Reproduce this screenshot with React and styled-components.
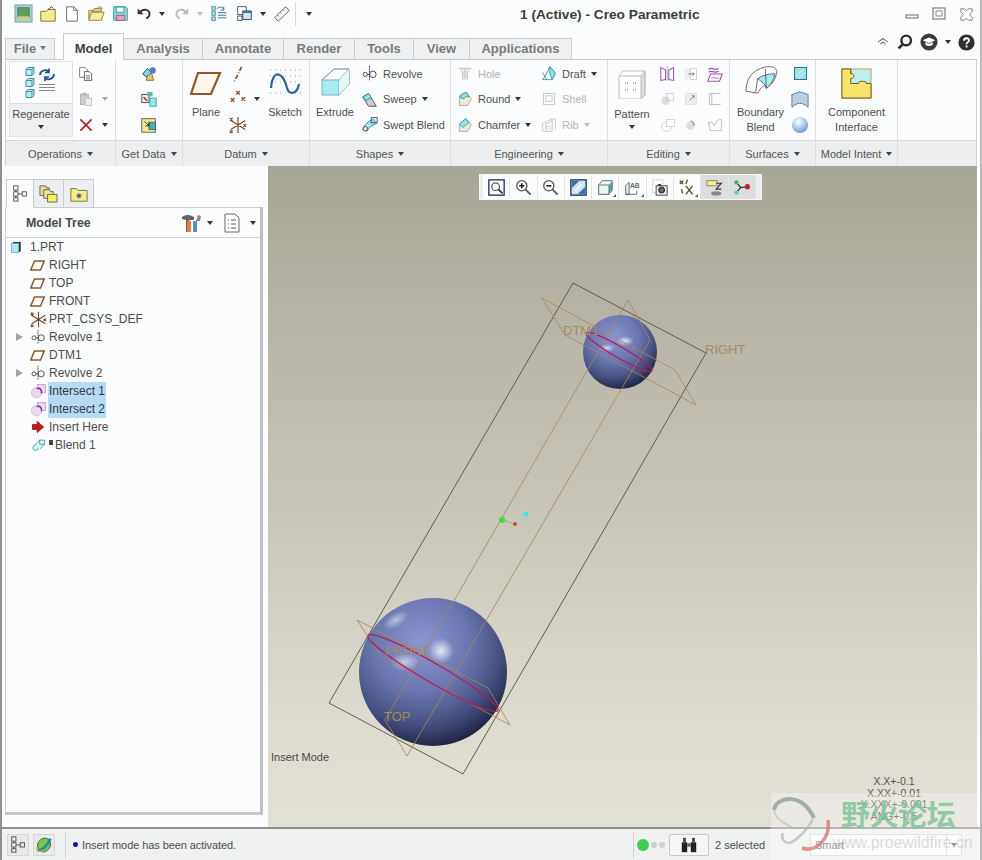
import React from "react";
import styled, { createGlobalStyle } from "styled-components";

const Global = createGlobalStyle`
  html, body { margin: 0; padding: 0; overflow: hidden; background: #fbfcfd; }
  body { font-family: "Liberation Sans", Arial, sans-serif; font-size: 11px; color: #4a4a4a; }
`;

const B = "#8a5a2e", C = "#b5f0f4", G = "#c9c9c9", P = "#a050b0";

const paths = {
  app: <><rect x="1" y="1" width="18" height="18" fill="#a7d6c5" stroke="#7f9f9a" /><rect x="4" y="4" width="12" height="10" fill="#5f9f55" stroke="#3f6f9f" /><rect x="4" y="13" width="12" height="3" fill="#d8d080" /></>,
  folderStar: <><path d="M2 7h6l2-2h8v13H2z" fill="#f6ec8e" stroke="#7a6a20" /><path d="M10 5l4-3 2 2" fill="none" stroke="#333" /></>,
  page: <path d="M4 2h8l4 4v12H4z M12 2v4h4" fill="#fff" stroke="#666" />,
  open: <><path d="M2 6h5l1-2h8v3H6l-3 9H2z" fill="#efe08a" stroke="#8a7a30" /><path d="M5 8h14l-3 9H2z" fill="#f8ec9e" stroke="#8a7a30" /><path d="M11 4c2-3 5-2 6 0" fill="none" stroke="#4a7fa0" /></>,
  save: <><path d="M2 2h14l2 2v14H2z" fill="#8fdcdc" stroke="#2f8f9a" /><rect x="5" y="2.5" width="9" height="6" fill="#fff" stroke="#2f8f9a" /><rect x="5" y="12" width="10" height="6" fill="#e8a0b8" stroke="#a05070" /></>,
  undo: <><path d="M5 8c4-4 11-3 11 3 0 3-2 4-4 5" fill="none" stroke="#333" strokeWidth="2.2" /><path d="M2 4v7h7z" fill="#333" /></>,
  redo: <><path d="M15 8c-4-4-11-3-11 3 0 3 2 4 4 5" fill="none" stroke="#bbb" strokeWidth="2.2" /><path d="M18 4v7h-7z" fill="#bbb" /></>,
  regenSmall: <><rect x="1" y="2" width="4" height="4" fill={C} stroke="#3a7a90" /><rect x="1" y="8" width="4" height="4" fill={C} stroke="#3a7a90" /><rect x="1" y="14" width="4" height="4" fill={C} stroke="#3a7a90" /><path d="M7 5c1-3 6-4 8 0M15 2v4h-4M8 9h10M8 12h10M8 15h10" fill="none" stroke="#2a5a90" /></>,
  windows: <><rect x="2" y="2" width="10" height="9" fill="#fff" stroke="#444" /><rect x="8" y="7" width="10" height="10" fill="#cfe7ee" stroke="#336" /><rect x="8" y="7" width="10" height="2.5" fill="#3f78a8" /><rect x="2" y="13" width="5" height="5" fill="#fff" stroke="#444" /></>,
  ruler: <><path d="M2 14L14 2l4 4L6 18z" fill="#fff" stroke="#444" /><path d="M5 11l2 2M8 8l2 2M11 5l2 2" stroke="#888" /></>,
  regen: <>
    <path d="M1 2.500l2-2h6v6l-2 2H1zM1 2.500h6v6M7 2.500l2-2" fill={C} stroke="#4a8a9a" />
    <path d="M1 13.500l2-2h6v6l-2 2H1zM1 13.500h6v6M7 13.500l2-2" fill={C} stroke="#4a8a9a" />
    <path d="M1 24.500l2-2h6v6l-2 2H1zM1 24.500h6v6M7 24.500l2-2" fill={C} stroke="#4a8a9a" />
    <path d="M15 8c0-4 6-7 9-3M24 1.500v4h-4M29 7c0 4-5 7-9 4M20 14v-4h4" fill="none" stroke="#1f4f8f" strokeWidth="1.700" />
    <path d="M14 17.500h16M14 20.500h16M14 23.500h16" stroke="#8a8a8a" />
  </>,
  copy: <><path d="M2 2h7l3 3v9H2z" fill="#fff" stroke="#666" /><path d="M8 7h6l3 3v8H8z" fill="#fff" stroke="#444" /><path d="M10 12h5M10 14h5M10 16h5" stroke="#777" /></>,
  paste: <><rect x="3" y="4" width="10" height="13" fill="#ccc" stroke="#aaa" /><rect x="6" y="2" width="4" height="4" fill="#bbb" /><rect x="9" y="9" width="8" height="9" fill="#eee" stroke="#bbb" /></>,
  del: <path d="M3 3l14 14M17 3L3 17" stroke="#b32626" strokeWidth="2.2" />,
  data1: <><path d="M3 10l5-6 5 4-5 6z" fill="#7fdbe6" stroke="#336" /><circle cx="14" cy="6" r="3.5" fill="#4f7fc8" /><path d="M8 12l5-3 2 8H7z" fill="#e0c878" stroke="#7a6a30" /></>,
  data2: <><rect x="2" y="5" width="8" height="9" fill="#f0f0f0" stroke="#444" /><rect x="8" y="2" width="6" height="5" fill="#5fb9b0" /><rect x="11" y="9" width="7" height="9" fill="#8fe9ee" stroke="#3a9" /><path d="M4 8l4 4" stroke="#b02020" strokeWidth="1.5" /></>,
  data3: <><rect x="2" y="3" width="15" height="15" fill="#f6ea8c" stroke="#555" /><rect x="10" y="7" width="7" height="8" fill="#4fb0b8" stroke="#2a6a7a" /><path d="M5 6l5 5M10 7v4H6" stroke="#222" fill="none" /></>,
  plane: <path d="M6 4h13l-5 12H1z" fill="#fff" stroke={B} strokeWidth="2" />,
  planeBig: <path d="M8 6h22l-9 21H1z" fill="#fbf5ea" stroke={B} strokeWidth="2.200" />,
  axis: <path d="M14 2L6 18" stroke={B} strokeWidth="2" strokeDasharray="5 2 1 2" />,
  points: <path d="M8 1l4 4M12 1L8 5M2 9l4 4M6 9l-4 4M14 8l4 4M18 8l-4 4" stroke={B} strokeWidth="1.6" />,
  csys: <path d="M10 1v18M2 5l16 10M2 15l16-10M1 2l3 3M4 2L1 5M16 9l3 3M19 9l-3 3M1 16l3 3M4 16l-3 3" stroke="#6a4a2a" strokeWidth="1.300" />,
  sketch: <><path d="M2 21c2-22 13-14 16 0 2 7 10 7 12-4" fill="none" stroke="#2f5f9a" strokeWidth="2.2" /><path d="M1 3h31M1 9h31M1 15h31M1 26h31" stroke="#999" strokeDasharray="1 4" /></>,
  extrude: <><path d="M2 12h17v15H2z" fill="#a5ecf3" stroke="#7fb0ba" /><path d="M2 12L14 1h15L19 12M29 1v15L19 27" fill="none" stroke="#777" /><path d="M19 12L29 1v15L19 27z" fill="#dff8fa" /></>,
  revolve: <><circle cx="5" cy="11" r="2.500" fill="none" stroke="#333" /><circle cx="14" cy="11" r="3.800" fill="none" stroke="#333" /><path d="M7.500 11H10" stroke="#333" /><path d="M10 1v18" stroke="#222" strokeDasharray="2 1" /></>,
  sweep: <><path d="M2 7l7-4 3 5 6 10H9z" fill="#ccc" stroke="#444" /><path d="M2 7l7-4 3 5-6 3z" fill="#8fe4ec" stroke="#2a8a98" /></>,
  swept: <><path d="M2 16c3-7 6-10 13-12l3 5c-6 2-8 4-11 9z" fill="#9fe7ee" stroke="#2a8a98" /><circle cx="5" cy="15" r="2.6" fill="#fff" stroke="#333" /><rect x="12" y="2" width="7" height="6" fill="none" stroke="#337" /></>,
  hole: <><path d="M2 3h16M5 3l2 6v8M15 3l-2 6v8M9 3v14M11 3v14" stroke="#c8c8c8" fill="none" strokeWidth="1.4" /></>,
  round: <><path d="M3 18V8c0-4 4-6 9-6l6 8-5 8z" fill="#f1ecd8" stroke="#999" /><path d="M4 8c1-3 4-5 8-6l3 5c-4 0-6 1-7 3z" fill="#8fe4ec" stroke="#2a8a98" /></>,
  chamfer: <><path d="M3 18V9l8-7 7 8-5 8z" fill="#f1ecd8" stroke="#999" /><path d="M3 9l8-7 4 5-8 6z" fill="#8fe4ec" stroke="#2a8a98" /></>,
  draft: <><path d="M2 17h12l4-8-7-8-6 12z" fill="#fff" stroke="#2a8a98" /><path d="M11 1l7 8-4 8-3-8z" fill="#8fe4ec" stroke="#2a8a98" /><path d="M2 8l5 9" stroke="#2a8a98" /></>,
  shell: <><rect x="3" y="3" width="14" height="14" fill="#fff" stroke={G} strokeWidth="1.3" /><rect x="6" y="6" width="8" height="7" fill="none" stroke={G} strokeWidth="1.3" /></>,
  rib: <><path d="M2 18V8l12-6v16z M6 18V9l12-7v14" fill="none" stroke={G} strokeWidth="1.2" /><path d="M6 12h6M6 15h6" stroke={G} /></>,
  pattern: <><path d="M2 7l4-5h22v24l-4 4H2z" fill="#fff" stroke="#bbb" /><path d="M24 7l4-5v24l-4 4zM2 7h22" fill="#ddd" stroke="#bbb" /><path d="M8 14h3M16 14h3M8 21h3M16 21h3" stroke="#999" strokeWidth="1.5" strokeDasharray="1 1" /></>,
  mirror: <><path d="M1 2l6 3v12l-6 1z M17 2l-6 3v12l6 1z" fill="none" stroke={P} strokeWidth="1.3" /><path d="M9 1v18" stroke="#999" /></>,
  moveCopy: <><rect x="2" y="3" width="15" height="14" fill="#eee" /><rect x="9" y="3" width="8" height="14" fill="#fff" stroke="#ccc" /><path d="M7 10h7M12 8l2 2-2 2" fill="none" stroke="#555" /></>,
  project: <><path d="M3 5c3-4 5 2 11-1M3 8c3-3 5 2 11-1" fill="none" stroke={P} strokeWidth="1.4" /><path d="M5 10h13l-3 8H2z" fill="#fff" stroke={P} strokeWidth="1.2" /><path d="M6 15c3-3 5 2 8-1" fill="none" stroke={P} /></>,
  offset: <><circle cx="7" cy="12" r="5.5" fill="#ddd" /><rect x="8" y="3" width="9" height="9" fill="none" stroke="#ccc" /></>,
  scale: <><rect x="3" y="3" width="14" height="14" fill="#eee" stroke="#ddd" /><path d="M8 12l6-6M11 6h3v3" fill="none" stroke="#777" /></>,
  brack: <path d="M17 3H3v14h14M6 3v14" fill="none" stroke="#bbb" strokeWidth="1.2" />,
  circSq: <><circle cx="8" cy="12" r="6" fill="none" stroke="#ccc" /><rect x="8" y="3" width="10" height="9" fill="#fff" stroke="#ccc" /></>,
  wheel: <><circle cx="9" cy="11" r="5" fill="#ddd" /><path d="M9 5a6 6 0 015 6" fill="none" stroke="#888" strokeWidth="1.5" /></>,
  flat: <path d="M2 7h5l2 4 4-7 5-1v14H4zM2 7v3" fill="none" stroke="#bbb" strokeWidth="1.1" />,
  boundary: <><path d="M2 26c0-12 6-22 20-25 6-1 11 0 12 5-2 8-4 12-11 17-1-5-5-2-9 5z" fill="#fff" stroke="#666" /><path d="M14 13c5-3 10-5 18-5-2 7-4 11-9 15-1-5-5-7-9-10z" fill="#a5ecf3" stroke="#666" /><path d="M14 13l-2 14M22 3l1 20" fill="none" stroke="#666" /></>,
  fill: <><rect x="2" y="2" width="16" height="16" fill="#a5e0e8" stroke="#1f7f8f" strokeWidth="1.4" /><path d="M4 14L14 4M8 16l8-8" stroke="#d8f4f6" /></>,
  mesh: <path d="M1 5l9-3 9 3v14l-3-2c-4-3-8-3-12 0l-3 2z" fill="#b8d0e4" stroke="#456" strokeDasharray="2 .6" />,
  puzzle: <><rect x="1" y="1" width="30" height="30" fill="#bfeef2" stroke="#b8a040" /><path d="M1 1h9v5c4-1 5 5 0 5v5h8c-2-3 10-3 8 0h5v15H1z" fill="#f6e56a" stroke="#6a5a20" /><path d="M10 1l0 5" stroke="#6a5a20" /></>,
  tree: <><rect x="2" y="1" width="5" height="5" fill="none" stroke="#444" /><rect x="2" y="8" width="5" height="5" fill="none" stroke="#444" /><rect x="2" y="15" width="5" height="4" fill="none" stroke="#444" /><rect x="12" y="8" width="5" height="5" fill="none" stroke="#444" /><path d="M4.500 6v2M4.500 13v2M7 10.500h5" stroke="#444" /></>,
  folders: <><path d="M1 2h6l1 2h3v8H1z" fill="#e8e19a" stroke="#666" /><path d="M5 6h6l1 2h3v7H5z" fill="#efe58c" stroke="#666" /><path d="M9 11h10v8H9z" fill="#f7ee62" stroke="#666" /></>,
  folderAst: <><path d="M1 4h6l2 2h10v12H1z" fill="#f7ee7c" stroke="#666" /><path d="M7 12h6M10 9v6M8 10l4 4M12 10l-4 4" stroke="#2233a0" /></>,
  tools: <><path d="M1 4c5-3 8-2 12 0v3H8v12H5V7L1 6z" fill="#666" /><rect x="6" y="8" width="4" height="11" fill="#e87a3a" /><rect x="12" y="8" width="4" height="11" fill="#4f8fd0" /><path d="M15 8l2-6 3 1-1 5z" fill="#888" /></>,
  list: <><path d="M3 1h10l4 4v14H3z" fill="#fff" stroke="#666" /><path d="M6 7h1M9 7h5M6 11h1M9 11h5M6 15h1M9 15h5" stroke="#555" /></>,
  part: <><path d="M1 5l3-2h10v13l-3 2H1z" fill="#333" /><rect x="1" y="5" width="10" height="13" fill="#a5ecf3" stroke="#6bb" /></>,
  intersect: <><rect x="8" y="2" width="10" height="10" fill="#ecd8f0" stroke="#b8a0c0" /><circle cx="7" cy="12" r="6.500" fill="#ecd8f0" stroke="#c8b8d0" /><path d="M7 7c4-2 7 2 6 6" fill="none" stroke="#8a2a90" strokeWidth="1.8" /></>,
  insert: <path d="M3 7h6V3l8 7-8 7v-4H3z" fill="#c11b1b" stroke="#7f1010" />,
  blend: <><circle cx="5" cy="14" r="3.800" fill="#d8f8fa" stroke="#2a8a98" /><path d="M4 10l7-7h7v6l-7 7" fill="#d8f8fa" stroke="#2a8a98" /><path d="M11 3v6h7" fill="none" stroke="#2a8a98" /></>,
  refit: <><rect x="1" y="1" width="18" height="18" fill="#fff" stroke="#203860" strokeWidth="1.6" /><circle cx="9" cy="9" r="4.500" fill="#fff" stroke="#555" strokeWidth="1.4" /><path d="M12 12l5 5" stroke="#333" strokeWidth="2" /></>,
  zoomIn: <><circle cx="8" cy="8" r="6" fill="#fff" stroke="#555" strokeWidth="1.5" /><path d="M5 8h6M8 5v6" stroke="#111" strokeWidth="1.8" /><path d="M12.500 12.500l6 6" stroke="#555" strokeWidth="2" /></>,
  zoomOut: <><circle cx="8" cy="8" r="6" fill="#fff" stroke="#555" strokeWidth="1.5" /><path d="M5 8h6" stroke="#111" strokeWidth="1.8" /><path d="M12.500 12.500l6 6" stroke="#555" strokeWidth="2" /></>,
  repaint: <><rect x="1" y="1" width="18" height="18" fill="#cfe2ef" stroke="#1a3a70" strokeWidth="1.6" /><path d="M2 2h9L2 11zM18 18H9l9-9z" fill="#3f6fb0" /><path d="M6 14l8-8" stroke="#fff" strokeWidth="2" strokeDasharray="2 1" /></>,
  cube: <><path d="M2 7l4-5h12v11l-4 5H2z" fill="#fff" stroke="#555" /><path d="M14 7l4-5v11l-4 5z" fill="#5f9ea0" /><path d="M2 7h12v11H2z" fill="#e8f8fa" stroke="#666" /></>,
  ab: <><path d="M2 8l4-4v14H2z" fill="#d8f4f6" stroke="#555" /><path d="M2 18h13v-4" fill="none" stroke="#555" /><AbText x="7" y="10">AB</AbText></>,
  camera: <><rect x="2" y="1" width="12" height="15" fill="#fff" stroke="#999" strokeDasharray="1 1" /><rect x="6" y="8" width="13" height="11" fill="#eee" stroke="#333" /><circle cx="12.500" cy="13" r="3.500" fill="#666" stroke="#111" /><rect x="8" y="6" width="4" height="2" fill="#333" /></>,
  xs: <path d="M1 2l4 4M5 2L1 6M8 8l8 10M16 8L8 18M3 12l1 5M10 1L8 6" stroke="#5a4a2a" strokeWidth="1.6" />,
  annot: <><rect x="1" y="2" width="12" height="6" fill="#f6ec8e" stroke="#876" /><path d="M12 5h6L12 12h6" fill="none" stroke="#333" strokeWidth="1.4" /><ellipse cx="12" cy="17" rx="6" ry="2.500" fill="#888" /></>,
  graph: <><path d="M4 4l5 6 9-1M9 10l-5 6" fill="none" stroke="#333" strokeWidth="1.4" /><circle cx="4" cy="4" r="2.500" fill="#4fb04f" /><circle cx="4" cy="16" r="2.500" fill="#4fc8d8" /><circle cx="17" cy="9" r="3" fill="#c02020" /></>,
  earth: <><ellipse cx="10" cy="10" rx="7" ry="8" fill="#7fc04f" stroke="#2a7a5a" transform="rotate(35 10 10)" /><path d="M3 16C7 17 15 10 17 3" stroke="#1f8fa0" strokeWidth="3" fill="none" /><path d="M2 12c-1 6 3 6 8 4" stroke="#e8b030" strokeWidth="1.4" fill="none" /></>,
  binoc: <><rect x="2" y="7" width="6" height="11" fill="#222" /><rect x="12" y="7" width="6" height="11" fill="#222" /><rect x="3.500" y="2" width="3" height="5" fill="#444" /><rect x="13.500" y="2" width="3" height="5" fill="#444" /><rect x="8" y="8" width="4" height="4" fill="#666" /></>,
  chev: <path d="M3 10l7-5 7 5M6 13l4-3 4 3" fill="none" stroke="#444" strokeWidth="1.4" />,
  search: <><circle cx="11.500" cy="8" r="6" fill="none" stroke="#2b2b2b" strokeWidth="3" /><path d="M7 13l-5 5" stroke="#2b2b2b" strokeWidth="3.400" /></>,
  hat: <><circle cx="10" cy="10" r="9.500" fill="#3b3b3b" /><path d="M3 8l7-3 7 3-7 3z" fill="#fff" /><path d="M6 10v3c2 2 6 2 8 0v-3l-4 2z" fill="#fff" /></>,
  help: <><circle cx="10" cy="10" r="9.500" fill="#2e2e2e" /><path d="M7 8c0-4 6-4 6-.5 0 2-3 2-3 4.500" fill="none" stroke="#fff" strokeWidth="2.200" /><rect x="9" y="13.500" width="2.200" height="2.400" fill="#fff" /></>,
  min: <rect x="2" y="9" width="12" height="3" fill="#fff" stroke="#666" />,
  max: <><rect x="2" y="2" width="12" height="11" fill="#fff" stroke="#666" /><rect x="5" y="5" width="6" height="5" fill="none" stroke="#888" /></>,
  close: <path d="M3 3l4 0 2 2 2-2 4 0 0 3-3 3 3 3 0 3-4 0-2-2-2 2-4 0 0-3 3-3-3-3z" fill="#fff" stroke="#777" />,
};

function AbText(props) {
  return <AbLabel {...props} />;
}

const AbLabel = styled.text`
  font-family: "Liberation Sans", Arial, sans-serif;
  font-size: 8.500px;
  fill: #333;
`;

const Svg = styled.svg`
  display: block;
  flex: none;
`;

const Icon = ({ name, s = 18, box = 20 }) => (
  <Svg width={s} height={s} viewBox={`0 0 ${box} ${box}`}>
    {paths[name]}
  </Svg>
);

const Window = styled.div`
  position: relative;
  width: 982px;
  height: 860px;
  box-sizing: border-box;
  border-left: 2px solid #8f8f8f;
  border-right: 2px solid #b9b9b9;
  background: #fbfcfd;
  display: flex;
  flex-direction: column;
  overflow: hidden;
`;

const TitleBar = styled.div`
  height: 36px;
  flex: none;
  display: flex;
  align-items: flex-start;
  padding-left: 9px;
`;

const Quick = styled.div`
  width: 509px;
  height: 27px;
  display: flex;
  align-items: center;
`;

const QSlot = styled.div`
  width: ${(p) => p.$w}px;
  height: 20px;
  display: flex;
  align-items: center;
  justify-content: center;
`;

const QSep = styled.div`
  width: 1px;
  height: 24px;
  background: #d5d7d8;
  margin: 0 5px 0 2px;
`;

const Caret = styled.span`
  display: inline-block;
  flex: none;
  width: 0;
  height: 0;
  border-left: 3px solid transparent;
  border-right: 3px solid transparent;
  border-top: 4px solid ${(p) => p.$c || "#333"};
`;

const Spacer = styled.span`
  flex: none;
  width: ${(p) => p.$w}px;
`;

const Title = styled.div`
  font-size: 13.700px;
  font-weight: 700;
  color: #3c3c3c;
  line-height: 29px;
  white-space: nowrap;
`;

const Controls = styled.div`
  margin-left: auto;
  display: flex;
  gap: 11px;
  padding: 6px 5px 0 0;
`;

const TabRow = styled.div`
  height: 24px;
  flex: none;
  display: flex;
  align-items: flex-end;
  padding-left: 3px;
  box-sizing: border-box;
  position: relative;
`;

const TabLine = styled.div`
  position: absolute;
  left: 3px;
  right: 3px;
  bottom: 0;
  height: 1px;
  background: #c6c8c9;
`;

const RTab = styled.div`
  width: ${(p) => p.$w}px;
  height: ${(p) => (p.$active ? 27 : 22)}px;
  ${(p) => (p.$active ? "margin-top: -5px;" : "")}
  margin-right: ${(p) => p.$mr || 0}px;
  box-sizing: border-box;
  border: 1px solid #c9cbcc;
  border-left: ${(p) => (p.$first || p.$active ? "1px solid #c9cbcc" : "none")};
  border-bottom: ${(p) => (p.$active ? "none" : "1px solid #c6c8c9")};
  background: ${(p) => (p.$active ? "#fbfcfd" : "#eef0f1")};
  color: ${(p) => (p.$active ? "#3f3f3f" : "#7a7a7a")};
  font-size: 13px;
  font-weight: 700;
  display: flex;
  align-items: center;
  justify-content: center;
  gap: 4px;
  padding-bottom: ${(p) => (p.$active ? 0 : 2)}px;
  padding-top: ${(p) => (p.$active ? 2 : 0)}px;
  position: relative;
  z-index: 1;
`;

const HelpBar = styled.div`
  margin-left: auto;
  align-self: center;
  margin-bottom: 12px;
  display: flex;
  align-items: center;
  padding-right: 5px;
  gap: 7px;
`;

const Ribbon = styled.div`
  flex: none;
  height: 106px;
  margin: 0 3px;
  box-sizing: border-box;
  border-left: 1px solid #d0d2d3;
  border-right: 1px solid #d0d2d3;
  display: flex;
  background: #fbfcfd;
`;

const Group = styled.div`
  width: ${(p) => p.$w}px;
  flex: ${(p) => (p.$grow ? "1" : "none")};
  display: flex;
  flex-direction: column;
  box-sizing: border-box;
  border-right: ${(p) => (p.$grow ? "none" : "1px solid #dcdedf")};
`;

const GroupBody = styled.div`
  height: 80px;
  box-sizing: border-box;
  display: flex;
  justify-content: ${(p) => p.$justify || "flex-start"};
  padding: 1px 0 0 ${(p) => p.$pl || 0}px;
`;

const GroupFoot = styled.div`
  height: 26px;
  background: #eceeef;
  border-top: 1px solid #d5d7d8;
  box-sizing: border-box;
  display: flex;
  align-items: center;
  justify-content: center;
  gap: 5px;
  color: #555;
  font-size: 11px;
`;

const Footer = ({ children }) => (
  <GroupFoot>
    {children}
    {children && <Caret $c="#444" />}
  </GroupFoot>
);

const Regen = styled.div`
  width: 64px;
  height: 76px;
  margin-left: 3px;
  border: 1px solid #e0e2e3;
  box-sizing: border-box;
  display: flex;
  flex-direction: column;
  flex: none;
`;

const RegenTop = styled.div`
  height: 41px;
  display: flex;
  justify-content: center;
  align-items: center;
  border-bottom: 1px solid #dcdedf;
`;

const RegenBottom = styled.div`
  flex: 1;
  background: #eff0f1;
  display: flex;
  flex-direction: column;
  align-items: center;
  padding-top: 4px;
  gap: 5px;
  color: #4f4f4f;
`;

const Large = styled.div`
  width: ${(p) => p.$w}px;
  flex: none;
  display: flex;
  flex-direction: column;
  align-items: center;
  color: #4f4f4f;
  line-height: 15px;
  text-align: center;
`;

const LargeIcon = styled.div`
  height: ${(p) => p.$h || 44}px;
  display: flex;
  align-items: center;
  justify-content: center;
`;

const CaretGap = styled.span`
  display: flex;
  margin-top: 3px;
`;

const Stack = styled.div`
  width: ${(p) => p.$w}px;
  flex: none;
  display: flex;
  flex-direction: column;
  padding-left: ${(p) => p.$pl || 0}px;
  box-sizing: border-box;
`;

const Item = styled.div`
  height: 25.500px;
  display: flex;
  align-items: center;
  justify-content: ${(p) => (p.$center ? "center" : "flex-start")};
  gap: ${(p) => p.$gap ?? 5}px;
  color: ${(p) => (p.$off ? "#b4b4b4" : "#4f4f4f")};
  white-space: nowrap;
  font-size: 11px;
`;

const Grid3 = styled.div`
  display: grid;
  grid-template-columns: repeat(3, 23.500px);
  grid-auto-rows: 25.500px;
  align-items: center;
  justify-items: center;
`;

const Main = styled.div`
  flex: 1;
  display: flex;
  min-height: 0;
`;

const Side = styled.div`
  width: 266px;
  flex: none;
  display: flex;
  flex-direction: column;
  padding: 13px 0 12px 3px;
  box-sizing: border-box;
`;

const SideTabs = styled.div`
  display: flex;
  height: 29px;
  flex: none;
  padding-left: 1px;
`;

const SideTab = styled.div`
  width: ${(p) => p.$w}px;
  box-sizing: border-box;
  display: flex;
  align-items: center;
  justify-content: center;
  background: ${(p) => (p.$active ? "#fbfcfd" : "#eceeef")};
  border: 1px solid #c9cbcc;
  border-left: ${(p) => (p.$active ? "1px solid #c9cbcc" : "none")};
  border-bottom: ${(p) => (p.$active ? "1px solid #fbfcfd" : "1px solid #c9cbcc")};
  position: relative;
  z-index: 1;
`;

const SidePanel = styled.div`
  flex: 1;
  width: 258px;
  margin-top: -1px;
  box-sizing: border-box;
  border-left: 1px solid #d0d2d3;
  border-top: 1px solid #c9cbcc;
  border-right: 3px solid #bdbfc0;
  border-bottom: 3px solid #c4c6c7;
  display: flex;
  flex-direction: column;
`;

const TreeHead = styled.div`
  height: 30px;
  flex: none;
  box-sizing: border-box;
  border-bottom: 1px solid #cfd1d2;
  display: flex;
  align-items: center;
  padding: 0 4px 0 20px;
`;

const TreeTitle = styled.div`
  font-weight: 700;
  color: #4a4a4a;
  font-size: 12.400px;
  margin-right: auto;
`;

const TreeTools = styled.div`
  display: flex;
  align-items: center;
`;

const Row = styled.div`
  height: 18px;
  display: flex;
  align-items: center;
  padding-left: ${(p) => p.$pl}px;
  font-size: 12px;
  color: #4c4c4c;
  white-space: nowrap;
`;

const Expander = styled.span`
  width: 0;
  height: 0;
  flex: none;
  border-top: 4.500px solid transparent;
  border-bottom: 4.500px solid transparent;
  border-left: 7px solid #a2a2a2;
  margin-right: 7px;
`;

const RowIcon = styled.span`
  width: ${(p) => p.$w || 20}px;
  flex: none;
  display: flex;
  align-items: center;
`;

const RowText = styled.span`
  padding: 0 1px;
  line-height: 18px;
  background: ${(p) => (p.$sel ? "#b6dcf4" : "transparent")};
  color: ${(p) => (p.$sel ? "#2f3a44" : "inherit")};
`;

const FailMark = styled.span`
  width: 4px;
  height: 5px;
  background: #444;
  margin: -6px 1px 0 2px;
`;

const Canvas = styled.div`
  flex: 1;
  margin-right: 3px;
  position: relative;
  background: linear-gradient(180deg, #a7a596 0%, #dedbd0 85%, #e2dfd5 100%);
  overflow: hidden;
`;

const Scene = styled.svg`
  position: absolute;
  inset: 0;
  display: block;
`;

const ViewBar = styled.div`
  position: absolute;
  left: 211px;
  top: 8px;
  width: 283px;
  height: 26px;
  box-sizing: border-box;
  background: #eceded;
  border: 1px solid #f7f7f7;
  padding: 0 3px;
  display: flex;
`;

const ViewBtn = styled.div`
  width: 27.300px;
  flex: none;
  box-sizing: border-box;
  background: ${(p) => (p.$on ? "#dcdddd" : "#fbfcfc")};
  border-right: 1px solid #e2e3e3;
  display: flex;
  align-items: center;
  justify-content: center;
  position: relative;
`;

const BtnCorner = styled.span`
  position: absolute;
  right: 2px;
  bottom: 2px;
  width: 0;
  height: 0;
  border-left: 3px solid transparent;
  border-bottom: 3px solid #555;
`;

const Mode = styled.div`
  position: absolute;
  left: 3px;
  top: 585px;
  color: #4a4a4a;
  font-size: 11px;
`;

const Tol = styled.div`
  position: absolute;
  right: 23px;
  top: 610px;
  width: 120px;
  text-align: center;
  font-size: 10.500px;
  line-height: 11.700px;
  color: #555;
`;

const Status = styled.div`
  height: 33px;
  flex: none;
  box-sizing: border-box;
  border-top: 2px solid #8f8f8f;
  background: #f0f1f1;
  display: flex;
  align-items: center;
  padding-left: 5px;
  font-size: 11px;
  color: #4f4f4f;
`;

const StatBtn = styled.div`
  width: 22px;
  height: 22px;
  box-sizing: border-box;
  border: 1px solid #d5d6d6;
  background: #e8eaea;
  display: flex;
  align-items: center;
  justify-content: center;
  margin-right: 4px;
`;

const VSep = styled.div`
  width: 1px;
  height: 26px;
  background: #d2d3d3;
  margin: ${(p) => p.$m};
`;

const Bullet = styled.span`
  width: 5px;
  height: 5px;
  border-radius: 50%;
  background: #1212a8;
  margin-right: 4px;
`;

const Msg = styled.div`
  width: 551px;
  letter-spacing: -0.080px;
  white-space: nowrap;
`;

const Light = styled.span`
  width: ${(p) => p.$s}px;
  height: ${(p) => p.$s}px;
  border-radius: 50%;
  background: ${(p) => p.$c};
  margin-right: ${(p) => p.$mr}px;
`;

const FindBtn = styled.div`
  width: 40px;
  height: 22px;
  box-sizing: border-box;
  border: 1px solid #c8c9c9;
  border-radius: 2px;
  background: #f6f6f6;
  display: flex;
  align-items: center;
  justify-content: center;
  margin-right: 6px;
`;

const SelCount = styled.div`
  width: 95px;
  font-size: 11px;
`;

const Select = styled.div`
  width: 152px;
  height: 22px;
  box-sizing: border-box;
  border: 1px solid #d5d6d6;
  background: #fbfbfb;
  display: flex;
  align-items: center;
  justify-content: space-between;
  padding-left: 4px;
  color: #666;
  font-size: 11px;
`;

const SelectBtn = styled.div`
  width: 14px;
  height: 100%;
  border-left: 1px solid #d5d6d6;
  display: flex;
  align-items: center;
  justify-content: center;
`;

const Watermark = styled.div`
  position: absolute;
  right: -2px;
  bottom: 0;
  width: 211px;
  height: 67px;
  background: rgba(255, 255, 255, 0.32);
  overflow: hidden;
  pointer-events: none;
`;

const WmLogo = styled.svg`
  position: absolute;
  left: 0;
  top: 0;
  display: block;
`;

const WmTitle = styled.div`
  position: absolute;
  left: 70px;
  top: 3px;
  font-family: "Noto Sans CJK SC", sans-serif;
  font-weight: 700;
  font-size: 29px;
  line-height: 34px;
  letter-spacing: -0.500px;
  color: rgba(120, 195, 150, 0.8);
  white-space: nowrap;
`;

const WmUrl = styled.div`
  position: absolute;
  left: 62px;
  top: 38px;
  font-size: 15.800px;
  line-height: 24px;
  color: rgba(170, 170, 170, 0.42);
  white-space: nowrap;
`;

const SVGLabel = styled.text`
  font-family: "Liberation Sans", Arial, sans-serif;
  font-size: 13px;
  fill: #a58a5e;
`;

const tree = [
  { t: "1.PRT", pl: 5, i: "part", w: 18, s: 14 },
  { t: "RIGHT", pl: 24, i: "plane", w: 18, s: 15 },
  { t: "TOP", pl: 24, i: "plane", w: 18, s: 15 },
  { t: "FRONT", pl: 24, i: "plane", w: 18, s: 15 },
  { t: "PRT_CSYS_DEF", pl: 24, i: "csys", w: 18, s: 17 },
  { t: "Revolve 1", pl: 10, exp: true, i: "revolve", w: 18, s: 16 },
  { t: "DTM1", pl: 24, i: "plane", w: 18, s: 15 },
  { t: "Revolve 2", pl: 10, exp: true, i: "revolve", w: 18, s: 16 },
  { t: "Intersect 1", pl: 25, i: "intersect", w: 17, s: 16, sel: true },
  { t: "Intersect 2", pl: 25, i: "intersect", w: 17, s: 16, sel: true },
  { t: "Insert Here", pl: 24, i: "insert", w: 18, s: 16 },
  { t: "Blend 1", pl: 26, i: "blend", w: 15, s: 14, fail: true },
];

const rtabs = [
  ["Analysis", 79], ["Annotate", 81], ["Render", 71], ["Tools", 59], ["View", 56], ["Applications", 102],
];

const viewBtns = [
  ["refit"], ["zoomIn"], ["zoomOut"], ["repaint"], ["cube", true], ["ab", true], ["camera"], ["xs", true], ["annot"], ["graph"],
];

const App = () => (
  <>
    <Global />
    <Window>
      <TitleBar>
        <Quick>
          <QSlot $w={25}><Icon name="app" s={19} /></QSlot>
          <QSlot $w={24}><Icon name="folderStar" s={18} /></QSlot>
          <QSlot $w={24}><Icon name="page" s={18} /></QSlot>
          <QSlot $w={24}><Icon name="open" s={18} /></QSlot>
          <QSlot $w={24}><Icon name="save" s={17} /></QSlot>
          <QSlot $w={24}><Icon name="undo" s={17} /></QSlot>
          <QSlot $w={12}><Caret /></QSlot>
          <QSlot $w={26}><Icon name="redo" s={17} /></QSlot>
          <QSlot $w={12}><Caret $c="#bbb" /></QSlot>
          <QSlot $w={26}><Icon name="regenSmall" s={17} /></QSlot>
          <QSlot $w={24}><Icon name="windows" s={17} /></QSlot>
          <QSlot $w={14}><Caret /></QSlot>
          <QSlot $w={23}><Icon name="ruler" s={18} /></QSlot>
          <QSep />
          <QSlot $w={16}><Caret /></QSlot>
        </Quick>
        <Title>1 (Active) - Creo Parametric</Title>
        <Controls>
          <Icon name="min" s={16} box={16} />
          <Icon name="max" s={16} box={16} />
          <Icon name="close" s={17} box={18} />
        </Controls>
      </TitleBar>
      <TabRow>
        <TabLine />
        <RTab $w={50} $first $mr={8}>File <Caret $c="#777" /></RTab>
        <RTab $w={61} $active>Model</RTab>
        {rtabs.map(([t, w]) => <RTab key={t} $w={w}>{t}</RTab>)}
        <HelpBar>
          <Icon name="chev" s={14} />
          <Icon name="search" s={16} />
          <Icon name="hat" s={18} />
          <Caret />
          <Icon name="help" s={17} />
        </HelpBar>
      </TabRow>
      <Ribbon>
        <Group $w={110}>
          <GroupBody>
            <Regen>
              <RegenTop><Icon name="regen" s={32} box={32} /></RegenTop>
              <RegenBottom>Regenerate<Caret /></RegenBottom>
            </Regen>
            <Stack $w={40} $pl={5}>
              <Item><Icon name="copy" s={16} /></Item>
              <Item $gap={8}><Icon name="paste" s={16} /><Caret $c="#aaa" /></Item>
              <Item $gap={8}><Icon name="del" s={16} /><Caret /></Item>
            </Stack>
          </GroupBody>
          <Footer>Operations</Footer>
        </Group>
        <Group $w={67}>
          <GroupBody $justify="center">
            <Stack $w={24}>
              <Item $center><Icon name="data1" s={18} /></Item>
              <Item $center><Icon name="data2" s={18} /></Item>
              <Item $center><Icon name="data3" s={18} /></Item>
            </Stack>
          </GroupBody>
          <Footer>Get Data</Footer>
        </Group>
        <Group $w={127}>
          <GroupBody $pl={4}>
            <Large $w={38}><LargeIcon><Icon name="planeBig" s={32} box={32} /></LargeIcon>Plane</Large>
            <Stack $w={39} $pl={4}>
              <Item><Icon name="axis" s={18} /></Item>
              <Item $gap={7}><Icon name="points" s={18} /><Caret /></Item>
              <Item><Icon name="csys" s={18} /></Item>
            </Stack>
            <Large $w={42}><LargeIcon><Icon name="sketch" s={32} box={32} /></LargeIcon>Sketch</Large>
          </GroupBody>
          <Footer>Datum</Footer>
        </Group>
        <Group $w={141}>
          <GroupBody $pl={4}>
            <Large $w={42}><LargeIcon><Icon name="extrude" s={30} box={30} /></LargeIcon>Extrude</Large>
            <Stack $w={94} $pl={5}>
              <Item><Icon name="revolve" s={17} />Revolve</Item>
              <Item><Icon name="sweep" s={17} />Sweep<Caret /></Item>
              <Item><Icon name="swept" s={17} />Swept Blend</Item>
            </Stack>
          </GroupBody>
          <Footer>Shapes</Footer>
        </Group>
        <Group $w={157}>
          <GroupBody $pl={6}>
            <Stack $w={84}>
              <Item $off><Icon name="hole" s={16} />Hole</Item>
              <Item><Icon name="round" s={16} />Round<Caret /></Item>
              <Item><Icon name="chamfer" s={16} />Chamfer<Caret /></Item>
            </Stack>
            <Stack $w={60}>
              <Item><Icon name="draft" s={16} />Draft<Caret /></Item>
              <Item $off><Icon name="shell" s={16} />Shell</Item>
              <Item $off><Icon name="rib" s={16} />Rib<Caret $c="#bbb" /></Item>
            </Stack>
          </GroupBody>
          <Footer>Engineering</Footer>
        </Group>
        <Group $w={122}>
          <GroupBody>
            <Large $w={48}>
              <LargeIcon $h={46}><Icon name="pattern" s={30} box={30} /></LargeIcon>
              Pattern
              <CaretGap><Caret /></CaretGap>
            </Large>
            <Grid3>
              <Icon name="mirror" s={16} /><Icon name="moveCopy" s={16} /><Icon name="project" s={18} />
              <Icon name="offset" s={16} /><Icon name="scale" s={16} /><Icon name="brack" s={16} />
              <Icon name="circSq" s={16} /><Icon name="wheel" s={16} /><Icon name="flat" s={16} />
            </Grid3>
          </GroupBody>
          <Footer>Editing</Footer>
        </Group>
        <Group $w={86}>
          <GroupBody $pl={3}>
            <Large $w={55}><LargeIcon><Icon name="boundary" s={34} box={35} /></LargeIcon>Boundary<br />Blend</Large>
            <Stack $w={24}>
              <Item $center><Icon name="fill" s={15} /></Item>
              <Item $center><Icon name="mesh" s={18} /></Item>
              <Item $center>
                <Svg width="18" height="18" viewBox="0 0 20 20">
                  <defs>
                    <radialGradient id="ball" cx="40%" cy="30%" r="70%"><stop offset="0" stopColor="#fff" /><stop offset="1" stopColor="#6f9fd8" /></radialGradient>
                  </defs>
                  <circle cx="10" cy="10" r="9" fill="url(#ball)" />
                </Svg>
              </Item>
            </Stack>
          </GroupBody>
          <Footer>Surfaces</Footer>
        </Group>
        <Group $w={82}>
          <GroupBody $justify="center">
            <Large $w={78}><LargeIcon><Icon name="puzzle" s={31} box={32} /></LargeIcon>Component<br />Interface</Large>
          </GroupBody>
          <Footer>Model Intent</Footer>
        </Group>
        <Group $grow>
          <GroupBody />
          <Footer />
        </Group>
      </Ribbon>
      <Main>
        <Side>
          <SideTabs>
            <SideTab $w={28} $active><Icon name="tree" s={17} /></SideTab>
            <SideTab $w={30}><Icon name="folders" s={19} /></SideTab>
            <SideTab $w={30}><Icon name="folderAst" s={18} /></SideTab>
          </SideTabs>
          <SidePanel>
            <TreeHead>
              <TreeTitle>Model Tree</TreeTitle>
              <TreeTools>
                <Icon name="tools" s={20} />
                <Spacer $w={6} />
                <Caret />
                <Spacer $w={9} />
                <Icon name="list" s={20} />
                <Spacer $w={8} />
                <Caret />
              </TreeTools>
            </TreeHead>
            {tree.map((r) => (
              <Row key={r.t} $pl={r.pl}>
                {r.exp && <Expander />}
                <RowIcon $w={r.w}><Icon name={r.i} s={r.s} /></RowIcon>
                {r.fail && <FailMark />}
                <RowText $sel={r.sel}>{r.t}</RowText>
              </Row>
            ))}
          </SidePanel>
        </Side>
        <Canvas>
          <Scene width="710" height="661" viewBox="268 166 710 661">
            <defs>
              <radialGradient id="sph" cx="42%" cy="32%" r="72%" fx="42%" fy="30%">
                <stop offset="0" stopColor="#8a95d2" />
                <stop offset="0.45" stopColor="#6b77b0" />
                <stop offset="0.75" stopColor="#464f80" />
                <stop offset="1" stopColor="#191d38" />
              </radialGradient>
              <radialGradient id="glow">
                <stop offset="0" stopColor="#fff" stopOpacity="0.95" />
                <stop offset="1" stopColor="#fff" stopOpacity="0" />
              </radialGradient>
            </defs>
            <path d="M573 283L706 353 463 774 329 703Z" fill="none" stroke="#555040" strokeWidth=".9" />
            <circle cx="433" cy="672" r="74" fill="url(#sph)" />
            <ellipse cx="396" cy="620" rx="14" ry="7" fill="url(#glow)" opacity=".55" transform="rotate(-30 396 620)" />
            <ellipse cx="441" cy="651" rx="13" ry="13" fill="url(#glow)" opacity=".85" />
            <ellipse cx="405" cy="662" rx="15" ry="9" fill="url(#glow)" opacity=".6" />
            <circle cx="620" cy="352" r="37" fill="url(#sph)" />
            <ellipse cx="625" cy="341" rx="9" ry="5" fill="url(#glow)" opacity=".8" />
            <ellipse cx="607" cy="348" rx="8" ry="4" fill="url(#glow)" opacity=".7" />
            <g fill="none" stroke="#a9865a" strokeOpacity=".85">
              <path d="M628 300L650 340 407 756 385 720Z" />
              <path d="M542 298L675 370 696 405 565 335Z" />
              <path d="M357 620L488 688 510 725 380 655Z" />
            </g>
            <g fill="none" stroke="#b51a55" strokeWidth="1.300">
              <ellipse cx="433" cy="673" rx="75" ry="9.500" transform="rotate(30 433 673)" />
              <ellipse cx="619" cy="352" rx="38" ry="5.500" transform="rotate(30 619 352)" />
            </g>
            <SVGLabel x="563" y="335">DTM1</SVGLabel>
            <SVGLabel x="705" y="354">RIGHT</SVGLabel>
            <SVGLabel x="385" y="655">FRONT</SVGLabel>
            <SVGLabel x="384" y="721">TOP</SVGLabel>
            <path d="M502 520L515 524" stroke="#8fc03f" />
            <path d="M515 524L526 514" stroke="#8fd8d8" />
            <circle cx="502" cy="520" r="3" fill="#3fdc3f" />
            <circle cx="515" cy="524" r="2" fill="#d84040" />
            <circle cx="526" cy="514" r="2.500" fill="#3fe8e8" />
          </Scene>
          <ViewBar>
            {viewBtns.map(([n, corner], i) => (
              <ViewBtn key={n} $on={i > 7}>
                <Icon name={n} s={17} />
                {corner && <BtnCorner />}
              </ViewBtn>
            ))}
          </ViewBar>
          <Mode>Insert Mode</Mode>
          <Tol>X.X+-0.1<br />X.XX+-0.01<br />X.XXX+-0.001<br />ANG+-0.5</Tol>
        </Canvas>
      </Main>
      <Status>
        <StatBtn><Icon name="tree" s={17} /></StatBtn>
        <StatBtn><Icon name="earth" s={18} /></StatBtn>
        <VSep $m="0 7px 0 6px" />
        <Bullet />
        <Msg>Insert mode has been activated.</Msg>
        <VSep $m="0 3px 0 0" />
        <Light $s={12} $c="#3fcf4f" $mr={2} />
        <Light $s={6} $c="#cfcfcf" $mr={2} />
        <Light $s={6} $c="#cfcfcf" $mr={4} />
        <FindBtn><Icon name="binoc" s={18} /></FindBtn>
        <SelCount>2 selected</SelCount>
        <Select>Smart<SelectBtn><Caret $c="#666" /></SelectBtn></Select>
      </Status>
      <Watermark>
        <WmLogo width="70" height="67" viewBox="0 0 70 67">
          <path d="M3 17C5 4 30-2 43 25" fill="none" stroke="#8a9a9c" strokeOpacity=".75" strokeWidth="4" />
          <path d="M3 17C5 28 14 30 24 36" fill="none" stroke="#aab4b5" strokeOpacity=".5" strokeWidth="2" />
          <path d="M42 26C36 38 24 48 19 50 12 50 10 44 12 40" fill="none" stroke="#aaa" strokeOpacity=".6" strokeWidth="2.500" />
          <path d="M57 27C60 45 45 60 31 55" fill="none" stroke="#d87070" strokeOpacity=".75" strokeWidth="3.500" />
        </WmLogo>
        <WmTitle>野火论坛</WmTitle>
        <WmUrl>www.proewildfire.cn</WmUrl>
      </Watermark>
    </Window>
  </>
);

export default App;
